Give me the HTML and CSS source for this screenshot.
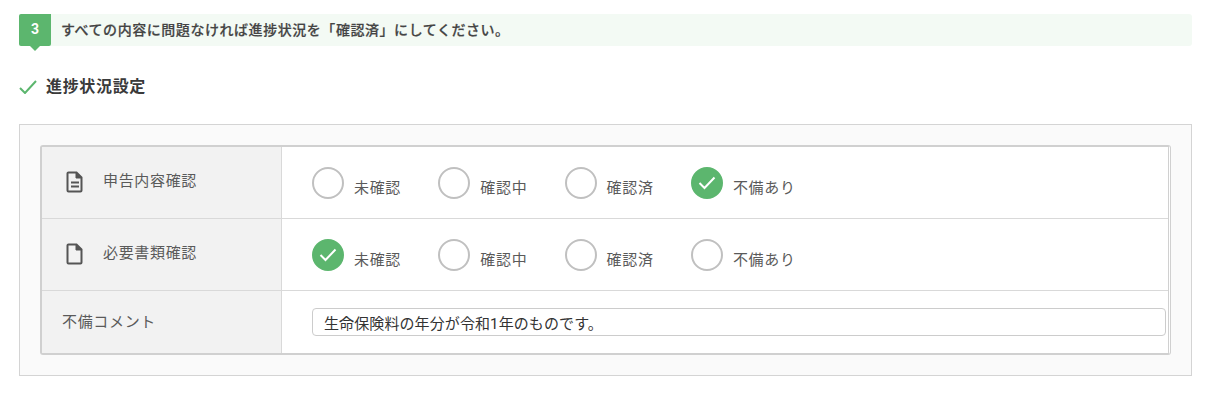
FILE: index.html
```html
<!DOCTYPE html>
<html lang="ja">
<head>
<meta charset="utf-8">
<title>進捗状況設定</title>
<link rel="stylesheet" href="styles.css">
</head>
<body>
<div class="banner">
  <div class="badge">3</div>
  <p class="banner-text">すべての内容に問題なければ進捗状況を「確認済」にしてください。</p>
</div>
<div class="heading">
  <svg class="heading-check" viewBox="0 0 18 14" width="18" height="14"><path d="M1 8l5 5L17 1" fill="none" stroke="#5cb66e" stroke-width="2"/></svg>
  <h2 class="heading-text">進捗状況設定</h2>
</div>
<div class="panel">
  <div class="table">
    <div class="row row-status">
      <div class="head">
        <svg class="doc" viewBox="0 0 18 22" width="18" height="22"><path d="M2.500 1.500h8l5 5v13a1 1 0 0 1-1 1h-12a1 1 0 0 1-1-1v-17a1 1 0 0 1 1-1z" fill="none" stroke="#555" stroke-width="2"/><path d="M10 1.500v5.500h5.500" fill="#555" stroke="#555" stroke-width="1"/><path d="M5 11.500h8M5 15.500h8" stroke="#555" stroke-width="2"/></svg>
        <span class="label">申告内容確認</span>
      </div>
      <div class="cell options">
        <div class="option"><span class="radio"></span><span class="opt-label">未確認</span></div>
        <div class="option"><span class="radio"></span><span class="opt-label">確認中</span></div>
        <div class="option"><span class="radio"></span><span class="opt-label">確認済</span></div>
        <div class="option"><span class="radio on"><svg viewBox="0 0 18 14" width="18" height="14"><path d="M1.500 7l5 5L16.500 1.500" fill="none" stroke="#fff" stroke-width="2"/></svg></span><span class="opt-label">不備あり</span></div>
      </div>
    </div>
    <div class="row row-status">
      <div class="head">
        <svg class="doc" viewBox="0 0 18 22" width="18" height="22"><path d="M2.500 1.500h8l5 5v13a1 1 0 0 1-1 1h-12a1 1 0 0 1-1-1v-17a1 1 0 0 1 1-1z" fill="none" stroke="#555" stroke-width="2"/><path d="M10 1.500v5.500h5.500" fill="#555" stroke="#555" stroke-width="1"/></svg>
        <span class="label">必要書類確認</span>
      </div>
      <div class="cell options">
        <div class="option"><span class="radio on"><svg viewBox="0 0 18 14" width="18" height="14"><path d="M1.500 7l5 5L16.500 1.500" fill="none" stroke="#fff" stroke-width="2"/></svg></span><span class="opt-label">未確認</span></div>
        <div class="option"><span class="radio"></span><span class="opt-label">確認中</span></div>
        <div class="option"><span class="radio"></span><span class="opt-label">確認済</span></div>
        <div class="option"><span class="radio"></span><span class="opt-label">不備あり</span></div>
      </div>
    </div>
    <div class="row row-comment">
      <div class="head head-comment"><span class="label">不備コメント</span></div>
      <div class="cell cell-comment"><input class="comment" type="text" value="生命保険料の年分が令和1年のものです。"></div>
    </div>
  </div>
</div>
</body>
</html>
```
FILE: styles.css
```css
* { box-sizing: border-box; }
html, body { margin: 0; padding: 0; background: #fff; }
body {
  padding: 14px 22px 0 19px;
  font-family: Roboto, "Noto Sans CJK JP", sans-serif;
  color: #444;
}
.banner {
  display: flex;
  align-items: center;
  height: 32px;
  background: #f3faf4;
  border-radius: 3px;
}
.badge {
  position: relative;
  width: 32px;
  height: 32px;
  flex: none;
  background: #5cb66e;
  color: #fff;
  border-radius: 2px 0 2px 2px;
  font-size: 14px;
  font-weight: 700;
  line-height: 31px;
  text-align: center;
}
.badge::after {
  content: "";
  position: absolute;
  left: 11px;
  top: 32px;
  border: 5px solid transparent;
  border-bottom: 0;
  border-top-color: #5cb66e;
}
.banner-text {
  margin: 0 0 0 10px;
  font-size: 14px;
  font-weight: 500;
  letter-spacing: 0.55px;
  color: #444;
  line-height: 30px;
  -webkit-text-stroke: 0.2px #444;
}
.heading {
  display: flex;
  align-items: center;
  height: 24px;
  margin-top: 27px;
  margin-bottom: 2px;
}
.heading-check { flex: none; margin-top: 4px; }
.heading-text {
  margin: 0 0 0 9px;
  font-size: 16px;
  font-weight: 700;
  letter-spacing: 0.67px;
  color: #3a3a3a;
}
.panel {
  margin-top: 27px;
  height: 252px;
  padding: 20px 20px;
  background: #fafafa;
  border: 1px solid #d4d4d4;
}
.table {
  height: 210px;
  border: 2px solid #d0d0d0;
  border-right: 3px double #d0d0d0;
  border-top-width: 2px;
  border-radius: 3px;
  background: #fff;
}
.row { display: flex; border-bottom: 1px solid #d9d9d9; }
.row:last-child { border-bottom: 0; }
.row-status { height: 72px; }
.row-comment { height: 62px; }
.head {
  flex: none;
  width: 240px;
  display: flex;
  align-items: center;
  padding: 0 0 6px 24px;
  background: #f2f2f2;
  border-right: 1px solid #d9d9d9;
}
.head-comment { padding: 0 0 3px 20px; }
.doc { flex: none; margin-right: 19px; margin-top: 4px; }
.label {
  font-size: 15px;
  letter-spacing: 0.67px;
  color: #5a5a5a;
}
.cell { flex: 1; min-width: 0; }
.options {
  display: flex;
  align-items: center;
  padding: 0 0 0 30px;
}
.option {
  display: flex;
  align-items: center;
  width: 126.300px;
}
.radio {
  flex: none;
  width: 32px;
  height: 32px;
  border: 2px solid #c0c0c0;
  border-radius: 50%;
  background: #fff;
  display: flex;
  align-items: center;
  justify-content: center;
}
.radio.on { background: #5cb66e; border-color: #5cb66e; }
.opt-label {
  margin: 7px 0 0 10px;
  font-size: 15px;
  letter-spacing: 0.67px;
  color: #5a5a5a;
}
.cell-comment {
  display: flex;
  align-items: center;
  padding: 0 2px 0 30px;
}
.comment {
  width: 100%;
  height: 28px;
  padding: 0 11px;
  border: 1px solid #ccc;
  border-radius: 4px;
  font: 15px Roboto, "Noto Sans CJK JP", sans-serif;
  letter-spacing: 0.1px;
  color: #333;
  background: #fff;
}
```
